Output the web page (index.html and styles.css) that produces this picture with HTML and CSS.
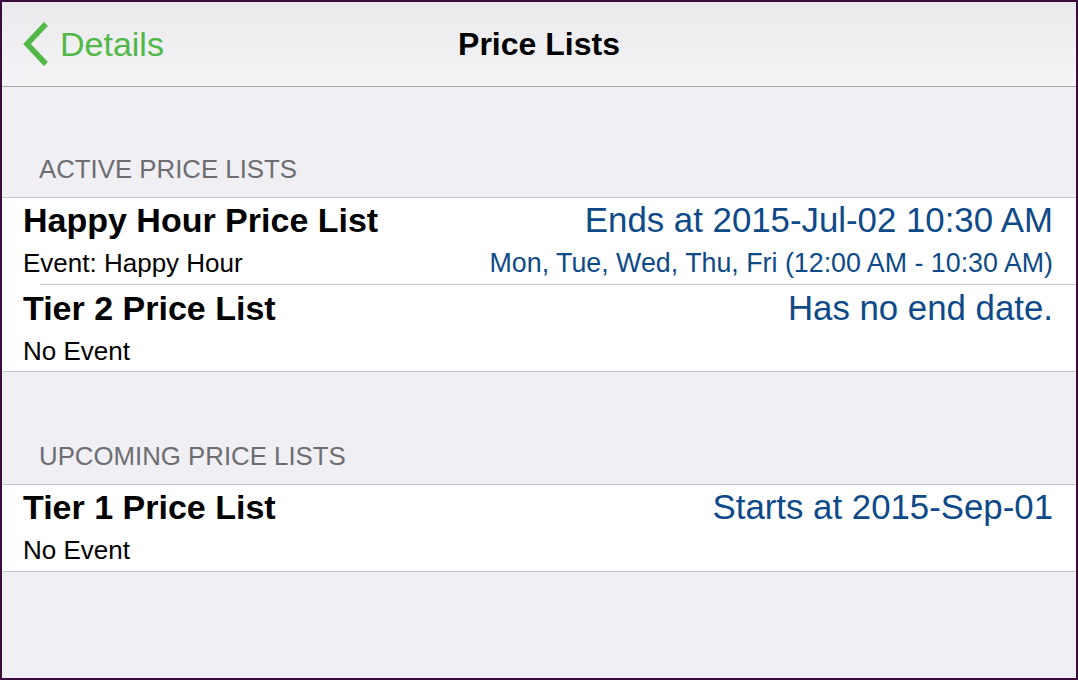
FILE: index.html
```html
<!DOCTYPE html>
<html>
<head>
<meta charset="utf-8">
<link rel="stylesheet" href="styles.css">
</head>
<body>
<div class="frame">
  <header class="nav">
    <a class="back">
      <svg class="chev" width="28" height="44" viewBox="0 0 28 44"><path d="M22 4 L5 22 L22 40" fill="none" stroke="#52b848" stroke-width="5.5" stroke-linecap="square" stroke-linejoin="miter"/></svg>
      <span class="back-label">Details</span>
    </a>
    <h1 class="nav-title">Price Lists</h1>
  </header>

  <div class="sec-head sec-head-first">ACTIVE PRICE LISTS</div>
  <section class="group">
    <div class="row">
      <div class="title">Happy Hour Price List</div>
      <div class="detail">Ends at 2015-Jul-02 10:30 AM</div>
      <div class="sub">Event: Happy Hour</div>
      <div class="detail-sub">Mon, Tue, Wed, Thu, Fri (12:00 AM - 10:30 AM)</div>
    </div>
    <div class="sep"></div>
    <div class="row">
      <div class="title">Tier 2 Price List</div>
      <div class="detail">Has no end date.</div>
      <div class="sub">No Event</div>
      <div class="detail-sub"></div>
    </div>
  </section>

  <div class="sec-head sec-head-second">UPCOMING PRICE LISTS</div>
  <section class="group">
    <div class="row">
      <div class="title">Tier 1 Price List</div>
      <div class="detail">Starts at 2015-Sep-01</div>
      <div class="sub">No Event</div>
      <div class="detail-sub"></div>
    </div>
  </section>
</div>
</body>
</html>
```
FILE: styles.css
```css
html, body {
  margin: 0;
  padding: 0;
}
body {
  font-family: "Liberation Sans", Arial, sans-serif;
  background: #efeff4;
}
.frame {
  box-sizing: border-box;
  width: 1078px;
  height: 680px;
  border: 2px solid #3b0b3d;
  background: #efeff4;
  overflow: hidden;
}
.nav {
  height: 84px;
  border-bottom: 1px solid #a9a9ac;
  background: linear-gradient(#eaeaec, #f5f5f7);
  display: grid;
  grid-template-columns: 1fr auto 1fr;
  align-items: center;
}
.back {
  display: flex;
  align-items: center;
  padding-left: 20px;
  color: #52b848;
}
.chev {
  display: block;
}
.back-label {
  font-size: 34px;
  margin-left: 10px;
  line-height: 40px;
}
.nav-title {
  margin: 0;
  font-size: 32px;
  font-weight: bold;
  color: #000;
  line-height: 40px;
}
.sec-head {
  box-sizing: border-box;
  display: flex;
  align-items: flex-end;
  padding: 0 0 13px 37px;
  font-size: 25.8px;
  line-height: 30px;
  color: #6d6d72;
}
.sec-head-first {
  height: 110px;
}
.sec-head-second {
  height: 112px;
}
.group {
  background: #fff;
  border-top: 1px solid #c8c7cc;
  border-bottom: 1px solid #c8c7cc;
}
.row {
  box-sizing: border-box;
  height: 86px;
  padding: 2px 23px 6px 21px;
  display: grid;
  grid-template-columns: 1fr auto;
  grid-template-rows: 40px 30px;
  row-gap: 8px;
}
.group .row + .sep + .row {
  padding-top: 3px;
}
.sep {
  height: 1px;
  margin-left: 38px;
  background: #c8c7cc;
}
.title {
  font-size: 34px;
  font-weight: bold;
  line-height: 40px;
  color: #000;
  white-space: nowrap;
}
.sub {
  font-size: 26px;
  line-height: 30px;
  color: #000;
  white-space: nowrap;
}
.detail {
  font-size: 34.8px;
  line-height: 40px;
  color: #0e4a88;
  text-align: right;
  white-space: nowrap;
}
.detail-sub {
  font-size: 26.8px;
  line-height: 30px;
  color: #0e4a88;
  text-align: right;
  white-space: nowrap;
}
```
